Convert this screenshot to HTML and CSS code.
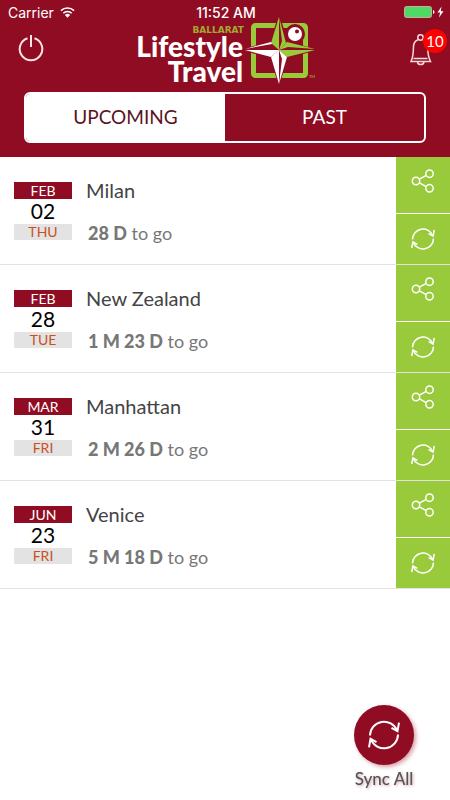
FILE: index.html
```html
<!DOCTYPE html>
<html lang="en">
<head>
    <meta charset="UTF-8">
    <meta name="viewport" content="width=device-width, initial-scale=1.0">
    <title>Ballarat Lifestyle Travel - Trips</title>
    <link rel="stylesheet" href="styles.css">
</head>
<body>
    <!-- Shared icons -->
    <svg class="sprite" aria-hidden="true">
        <symbol id="icon-share" viewBox="0 0 24 24">
            <g fill="none" stroke="currentColor" stroke-width="1.5">
                <circle cx="5" cy="12" r="3.7"/>
                <circle cx="18.5" cy="4.7" r="3.7"/>
                <circle cx="18.5" cy="19.3" r="3.7"/>
                <path d="M8.3 10.2l7-3.8M8.3 13.8l7 3.8"/>
            </g>
        </symbol>
        <symbol id="icon-sync" viewBox="0 0 32 32">
            <g fill="none" stroke="currentColor" stroke-width="2">
                <path d="M2 16.500A14 14 0 0 1 29 11.500M30 15.500A14 14 0 0 1 3 20.500"/>
                <path d="M23.500 8.800l6 3.400 1.500-8.500M8.500 23.200l-6-3.400-1.500 8.500"/>
            </g>
        </symbol>
    </svg>

    <header class="header">
        <div class="status-bar">
            <div class="carrier">
                <span>Carrier</span>
                <svg class="wifi" viewBox="0 0 16 12" aria-hidden="true">
                    <path d="M1 4.600a10 10 0 0 1 14 0M3.500 7.300a6.400 6.400 0 0 1 9 0" fill="none" stroke="#fff" stroke-width="1.700"/>
                    <path d="M8 12L5.200 9.200a4 4 0 0 1 5.600 0z" fill="#fff"/>
                </svg>
            </div>
            <span class="clock">11:52 AM</span>
            <div class="power-status">
                <svg class="battery" viewBox="0 0 40 13" aria-hidden="true">
                    <rect x="0.500" y="0.500" width="27" height="11" rx="2" fill="#4cd964" stroke="#d9a5a0"/>
                    <path d="M29 4v4q1.500-.5 1.500-2T29 4z" fill="#fff"/>
                    <path d="M37.500 0.500L33.500 6.500h2.600L35 11.500l4.500-6.300h-2.700z" fill="#fff"/>
                </svg>
            </div>
        </div>

        <div class="brand-bar">
            <button class="icon-button" type="button" aria-label="Log out">
                <svg class="power-icon" viewBox="0 0 26 28" fill="none" stroke="#f9e4e6" stroke-width="2" aria-hidden="true">
                    <path d="M9.500 4.300a11.300 11.300 0 1 0 7 0M13 1v12"/>
                </svg>
            </button>

            <svg class="logo" viewBox="0 0 184 74" role="img" aria-label="Ballarat Lifestyle Travel">
                <text class="logo-small" x="111" y="19" text-anchor="end">BALLARAT</text>
                <text class="logo-big" x="110" y="43" text-anchor="end">Lifestyle</text>
                <text class="logo-big" x="110" y="68" text-anchor="end">Travel</text>
                <rect x="120.500" y="11.500" width="52" height="50" rx="2" fill="none" stroke="#99ca3c" stroke-width="5"/>
                <circle cx="162" cy="20" r="10" fill="#900c23"/>
                <!-- compass star: upper and right points green, lower and left white -->
                <path d="M146 0l9 27 30 9-30 8-9 28-9-28-29-8 29-9z" fill="#900c23"/>
                <g fill="#99ca3c">
                    <path d="M146 3l-8 26 8 7z"/>
                    <path d="M146 3l7 26-7 7 3-9z"/>
                    <path d="M182 35l-28-7-8 8 9-3z"/>
                    <path d="M182 36l-28 7-8-7z"/>
                </g>
                <g fill="#fff">
                    <path d="M146 70l-8-27 8-7z"/>
                    <path d="M146 70l8-27-8-7 3 9z"/>
                    <path d="M112 35l26-7 1 2z"/>
                    <path d="M112 36l26 7 8-7z"/>
                </g>
                <circle cx="162" cy="20" r="7" fill="#fff"/>
                <circle cx="164" cy="17.500" r="2" fill="#900c23"/>
                <text class="logo-mark" x="176" y="64">TM</text>
            </svg>

            <button class="icon-button bell" type="button" aria-label="Notifications">
                <svg class="bell-icon" viewBox="0 0 22 32" fill="none" stroke="#f6d9dc" stroke-width="1.500" aria-hidden="true">
                    <circle cx="10.500" cy="3.500" r="2.700"/>
                    <path d="M8 5.800C4.200 7 3.400 10 3.400 14c0 7-.8 10-2.400 13.500h19.500C18.700 24 17.800 21 17.800 14c0-4-1-7-4.800-8.200"/>
                    <path d="M3.500 24.500h14M7.500 28q.5 2.600 3.200 2.600T14 28"/>
                </svg>
                <span class="badge">10</span>
            </button>
        </div>

        <nav class="tabs">
            <button class="tab active" type="button">UPCOMING</button>
            <button class="tab" type="button">PAST</button>
        </nav>
    </header>

    <main class="trips">
        <article class="trip">
            <div class="date">
                <span class="month">FEB</span>
                <span class="day">02</span>
                <span class="weekday">THU</span>
            </div>
            <div class="info">
                <h2 class="place">Milan</h2>
                <p class="countdown"><strong>28 D</strong> to go</p>
            </div>
            <div class="actions">
                <button class="action share" type="button" aria-label="Share Milan"><svg><use href="#icon-share"/></svg></button>
                <button class="action sync" type="button" aria-label="Sync Milan"><svg><use href="#icon-sync"/></svg></button>
            </div>
        </article>

        <article class="trip">
            <div class="date">
                <span class="month">FEB</span>
                <span class="day">28</span>
                <span class="weekday">TUE</span>
            </div>
            <div class="info">
                <h2 class="place">New Zealand</h2>
                <p class="countdown"><strong>1 M 23 D</strong> to go</p>
            </div>
            <div class="actions">
                <button class="action share" type="button" aria-label="Share New Zealand"><svg><use href="#icon-share"/></svg></button>
                <button class="action sync" type="button" aria-label="Sync New Zealand"><svg><use href="#icon-sync"/></svg></button>
            </div>
        </article>

        <article class="trip">
            <div class="date">
                <span class="month">MAR</span>
                <span class="day">31</span>
                <span class="weekday">FRI</span>
            </div>
            <div class="info">
                <h2 class="place">Manhattan</h2>
                <p class="countdown"><strong>2 M 26 D</strong> to go</p>
            </div>
            <div class="actions">
                <button class="action share" type="button" aria-label="Share Manhattan"><svg><use href="#icon-share"/></svg></button>
                <button class="action sync" type="button" aria-label="Sync Manhattan"><svg><use href="#icon-sync"/></svg></button>
            </div>
        </article>

        <article class="trip">
            <div class="date">
                <span class="month">JUN</span>
                <span class="day">23</span>
                <span class="weekday">FRI</span>
            </div>
            <div class="info">
                <h2 class="place">Venice</h2>
                <p class="countdown"><strong>5 M 18 D</strong> to go</p>
            </div>
            <div class="actions">
                <button class="action share" type="button" aria-label="Share Venice"><svg><use href="#icon-share"/></svg></button>
                <button class="action sync" type="button" aria-label="Sync Venice"><svg><use href="#icon-sync"/></svg></button>
            </div>
        </article>
    </main>

    <button class="sync-all" type="button">
        <span class="sync-circle"><svg><use href="#icon-sync"/></svg></span>
        <span class="sync-label">Sync All</span>
    </button>
</body>
</html>
```

FILE: styles.css
```css
* {
    box-sizing: border-box;
}

body {
    margin: 0;
    background: #fff;
    color: #444;
    font-family: Lato, "Open Sans", sans-serif;
}

button {
    padding: 0;
    border: 0;
    background: none;
    color: inherit;
    font: inherit;
    cursor: pointer;
}

svg {
    display: block;
}

.sprite {
    display: none;
}

/* Header */
.header {
    padding-bottom: 14px;
    background: #900c23;
    color: #fff;
}

.status-bar {
    display: grid;
    grid-template-columns: 1fr auto 1fr;
    align-items: center;
    height: 24px;
    padding: 0 6px 0 8px;
    font-family: Inter, sans-serif;
    font-size: 14px;
}

.carrier {
    display: flex;
    align-items: center;
    gap: 6px;
}

.wifi {
    width: 15px;
    height: 12px;
}

.clock {
    font-weight: 500;
}

.battery {
    width: 40px;
    height: 13px;
    margin-left: auto;
}

.brand-bar {
    display: grid;
    grid-template-columns: 1fr auto 1fr;
    height: 68px;
    padding: 0 18px;
}

.icon-button {
    position: relative;
    align-self: start;
    justify-self: start;
    margin-top: 10px;
}

.power-icon {
    width: 26px;
    height: 28px;
}

.bell {
    justify-self: end;
}

.bell-icon {
    width: 22px;
    height: 32px;
}

.badge {
    position: absolute;
    top: -5px;
    left: 13px;
    width: 24px;
    height: 24px;
    border-radius: 50%;
    background: #fe0000;
    font-size: 15px;
    line-height: 24px;
    text-align: center;
}

/* the star reaches up into the status bar */
.logo {
    width: 184px;
    height: 74px;
    margin-top: -10px;
    overflow: visible;
}

.logo-big {
    fill: #fff;
    font-family: Lato, sans-serif;
    font-size: 28px;
    font-weight: 900;
}

.logo-small {
    fill: #a5a832;
    font-family: "DejaVu Sans", sans-serif;
    font-size: 9px;
    font-weight: 700;
}

.logo-mark {
    fill: #99ca3c;
    font-size: 4px;
}

.tabs {
    display: flex;
    height: 51px;
    margin: 0 24px;
    border: 2px solid #fff;
    border-radius: 6px;
    overflow: hidden;
}

.tab {
    flex: 1;
    padding-bottom: 2px;
    font-size: 19px;
}

.tab.active {
    background: #fff;
    color: #5a1420;
}

/* Trip list */
.trip {
    display: flex;
    height: 108px;
    border-bottom: 1px solid #e2e2e2;
}

.date {
    display: flex;
    flex-direction: column;
    width: 58px;
    margin: 25px 14px 0;
    text-align: center;
}

.month,
.weekday {
    background: #900c23;
    color: #fff;
    font-size: 14px;
    line-height: 17px;
}

.weekday {
    background: #e3e3e3;
    color: #c8501e;
    line-height: 16px;
}

.day {
    padding-bottom: 2px;
    color: #000;
    font-size: 21px;
    line-height: 23px;
}

.info {
    flex: 1;
    padding-top: 20px;
}

.place {
    margin: 0;
    font-size: 20px;
    font-weight: 400;
    line-height: 26px;
}

.countdown {
    margin: 17px 0 0;
    padding-left: 2px;
    color: #777;
    font-size: 18px;
    line-height: 26px;
}

.countdown strong {
    font-weight: 900;
}

.actions {
    display: flex;
    flex-direction: column;
    gap: 1px;
    width: 54px;
}

.action {
    display: flex;
    justify-content: center;
    align-items: center;
    flex: 1;
    background: #99ca3c;
    color: #fff;
}

.action svg {
    width: 24px;
    height: 24px;
}

.share {
    flex: none;
    height: 56px;
    padding-bottom: 8px;
}

/* Floating sync button */
.sync-all {
    position: fixed;
    right: 36px;
    bottom: 9px;
    display: flex;
    flex-direction: column;
    align-items: center;
    gap: 2px;
}

.sync-circle {
    display: flex;
    justify-content: center;
    align-items: center;
    width: 60px;
    height: 60px;
    border-radius: 50%;
    background: #900c23;
    box-shadow: 2px 2px 4px rgba(144, 12, 35, 0.4);
    color: #fff;
}

.sync-circle svg {
    width: 32px;
    height: 32px;
}

.sync-label {
    color: #555;
    font-size: 17px;
    font-weight: 500;
    line-height: 24px;
    text-shadow: 1px 1px 3px rgba(144, 12, 35, 0.4);
}
```
